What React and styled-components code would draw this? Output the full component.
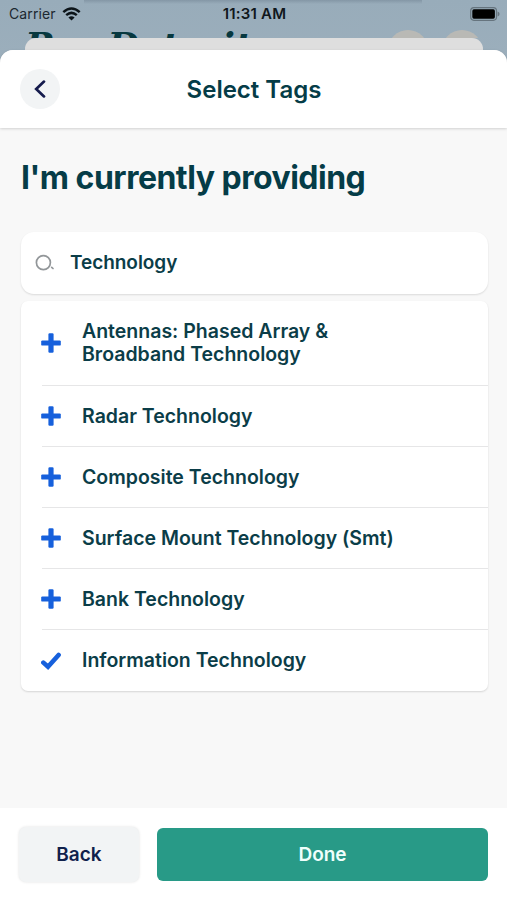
import React from "react"
import styled, { createGlobalStyle } from "styled-components"

const GlobalStyle = createGlobalStyle`
  * {
    box-sizing: border-box;
  }

  body {
    margin: 0;
    background: #f8f8f8;
    font-family: Inter, "Liberation Sans", sans-serif;
  }
`

const Screen = styled.div`
  width: 507px;
  height: 900px;
  overflow: hidden;
  display: flex;
  flex-direction: column;
  background: linear-gradient(180deg, #8497a6, rgba(132, 151, 166, 0)) 84px 0 / 338px 4px no-repeat,
    linear-gradient(180deg, #98acba 0, #9eb0bd 100px);
`

const StatusBar = styled.div`
  height: 27px;
  flex: none;
  display: grid;
  grid-template-columns: 1fr auto 1fr;
  align-items: center;
  padding: 0 7px 0 9px;
  color: #1c2830;
  font-size: 14px;
`

const Carrier = styled.div`
  display: flex;
  align-items: center;
  gap: 6px;
  letter-spacing: 0.1px;
`

const Time = styled.div`
  font-size: 15px;
  font-weight: 600;
  color: #10171c;
  letter-spacing: 0.2px;
`

const Battery = styled.svg`
  justify-self: end;
`

const Backdrop = styled.div`
  height: 11px;
  flex: none;
  overflow: hidden;
  display: flex;
  justify-content: space-between;
  padding: 3px 25px 0 25px;
`

const BrandTitle = styled.div`
  font-family: "DejaVu Serif", serif;
  font-size: 36px;
  line-height: 36px;
  font-weight: 700;
  font-style: italic;
  color: #07383f;
  margin-top: -3px;
`

const BackdropButtons = styled.div`
  display: flex;
  gap: 14px;
`

const BackdropButton = styled.div`
  width: 40px;
  height: 40px;
  border-radius: 50%;
  background: #b9b9b5;
`

const SheetBehind = styled.div`
  height: 12px;
  flex: none;
  margin: 0 24px 0 25px;
  border-radius: 11px 11px 0 0;
  background: #dedede;
`

const Sheet = styled.div`
  flex: 1;
  display: flex;
  flex-direction: column;
  border-radius: 13px 13px 0 0;
  background: #f8f8f8;
`

const Header = styled.header`
  height: 78px;
  flex: none;
  display: grid;
  grid-template-columns: 40px 1fr 40px;
  align-items: center;
  padding: 0 19px 0 20px;
  border-radius: 13px 13px 0 0;
  background: #fff;
  box-shadow: 0 1px 3px rgba(0, 0, 0, 0.16);
`

const RoundButton = styled.button`
  width: 40px;
  height: 40px;
  display: flex;
  align-items: center;
  justify-content: center;
  padding: 0;
  border: 0;
  border-radius: 50%;
  background: #f2f4f5;
`

const Title = styled.h1`
  margin: 0;
  text-align: center;
  font-size: 24px;
  font-weight: 600;
  letter-spacing: 0;
  color: #053c47;
`

const Content = styled.main`
  flex: 1;
  padding: 29px 19px 0 21px;
`

const Heading = styled.h2`
  margin: 0;
  font-size: 32px;
  line-height: 42px;
  font-weight: 700;
  letter-spacing: -0.5px;
  color: #053c47;
`

const SearchBox = styled.div`
  height: 62px;
  margin-top: 33px;
  display: flex;
  align-items: center;
  gap: 15px;
  padding-left: 14px;
  border-radius: 13px;
  background: #fff;
  box-shadow: 0 1px 2px rgba(0, 0, 0, 0.12);
`

const SearchInput = styled.input`
  flex: 1;
  padding: 0 0 1px;
  border: 0;
  outline: 0;
  background: none;
  font: 600 19px Inter, "Liberation Sans", sans-serif;
  letter-spacing: -0.05px;
  color: #0b3d48;
`

const TagList = styled.ul`
  margin: 7px 0 0;
  padding: 0 0 0 21px;
  list-style: none;
  border-radius: 7px;
  background: #fff;
  box-shadow: 0 1px 2px rgba(0, 0, 0, 0.14);
`

const TagRow = styled.li`
  height: ${({ $tall }) => ($tall ? "85px" : "61.1px")};
  display: flex;
  align-items: center;
  gap: 21px;
  margin-left: ${({ $last }) => ($last ? "-1px" : "0")};
  border-bottom: ${({ $last }) => ($last ? "0" : "1.5px solid #e6e6e7")};

  svg {
    flex: none;
    margin-left: ${({ $last }) => ($last ? "0" : "-1px")};
  }
`

const TagName = styled.span`
  white-space: pre-line;
  font-size: 19.5px;
  line-height: 23px;
  font-weight: 600;
  color: #0b3d48;
`

const Footer = styled.footer`
  height: 92px;
  flex: none;
  display: flex;
  align-items: flex-start;
  gap: 18px;
  padding: 19px 19px 0 19px;
  background: #fff;
`

const BackButton = styled.button`
  width: 120px;
  height: 55px;
  border: 0;
  border-radius: 7px;
  background: #f2f4f5;
  box-shadow: 0 0 3px rgba(0, 0, 0, 0.12);
  font: 600 19px Inter, "Liberation Sans", sans-serif;
  color: #10214c;
`

const DoneButton = styled.button`
  flex: 1;
  height: 53px;
  margin-top: 1px;
  border: 0;
  border-radius: 6px;
  background: #289a87;
  font: 600 19px Inter, "Liberation Sans", sans-serif;
  color: #effffc;
`

const WifiIcon = () => (
  <svg width="19" height="14" viewBox="0 0 19 14">
    <g fill="none" stroke="#0c1419" strokeWidth="2.5">
      <path d="M1.3 5.1Q9.5 -2 17.7 5.1" />
      <path d="M4.2 8.1Q9.5 3.6 14.8 8.1" />
    </g>
    <path d="M6.4 10.4Q9.5 7.9 12.6 10.4L9.5 13.5Z" fill="#0c1419" />
  </svg>
)

const BatteryIcon = () => (
  <Battery width="30" height="14" viewBox="0 0 30 14">
    <rect x="0.7" y="0.7" width="25.8" height="12.6" rx="3.2" fill="none" stroke="#66747e" strokeWidth="1.2" />
    <rect x="2.3" y="2.3" width="22.6" height="9.4" rx="1.6" fill="#000" />
    <path d="M27.6 4.6Q29.6 5.2 29.6 7T27.6 9.4Z" fill="#66747e" />
  </Battery>
)

const ChevronIcon = () => (
  <svg width="12" height="18" viewBox="0 0 12 18">
    <path d="M10 1.6L2.2 9L10 16.4" fill="none" stroke="#151b4d" strokeWidth="2.7" strokeLinecap="round" />
  </svg>
)

const SearchIcon = () => (
  <svg width="20" height="18" viewBox="0 0 20 18">
    <circle cx="8.4" cy="8.6" r="7" fill="none" stroke="#929699" strokeWidth="1.7" />
    <path d="M16.7 13.3L18 14.5" stroke="#929699" strokeWidth="1.7" strokeLinecap="round" />
  </svg>
)

const PlusIcon = () => (
  <svg width="20" height="20" viewBox="0 0 20 20" fill="#1660dc">
    <rect x="7.4" y="0.2" width="5.2" height="19.6" rx="1.2" />
    <rect x="0.2" y="7.4" width="19.6" height="5.2" rx="1.2" />
  </svg>
)

const CheckIcon = () => (
  <svg width="20" height="20" viewBox="0 0 20 20">
    <path d="M2.4 11.6L7 15.8L17.6 4" fill="none" stroke="#1660dc" strokeWidth="4.6" strokeLinecap="round" />
  </svg>
)

const tags = [
  { name: "Antennas: Phased Array &\nBroadband Technology", tall: true },
  { name: "Radar Technology" },
  { name: "Composite Technology" },
  { name: "Surface Mount Technology (Smt)" },
  { name: "Bank Technology" },
  { name: "Information Technology", selected: true },
]

const App = () => (
  <>
    <GlobalStyle />
    <Screen>
      <StatusBar>
        <Carrier>
          Carrier
          <WifiIcon />
        </Carrier>
        <Time>11:31 AM</Time>
        <BatteryIcon />
      </StatusBar>
      <Backdrop>
        <BrandTitle>Pro Detroit</BrandTitle>
        <BackdropButtons>
          <BackdropButton />
          <BackdropButton />
        </BackdropButtons>
      </Backdrop>
      <SheetBehind />
      <Sheet>
        <Header>
          <RoundButton aria-label="Go back">
            <ChevronIcon />
          </RoundButton>
          <Title>Select Tags</Title>
        </Header>
        <Content>
          <Heading>I'm currently providing</Heading>
          <SearchBox>
            <SearchIcon />
            <SearchInput defaultValue="Technology" />
          </SearchBox>
          <TagList>
            {tags.map(({ name, tall, selected }, index) => (
              <TagRow key={name} $tall={tall} $last={index === tags.length - 1}>
                {selected ? <CheckIcon /> : <PlusIcon />}
                <TagName>{name}</TagName>
              </TagRow>
            ))}
          </TagList>
        </Content>
        <Footer>
          <BackButton>Back</BackButton>
          <DoneButton>Done</DoneButton>
        </Footer>
      </Sheet>
    </Screen>
  </>
)

export default App
